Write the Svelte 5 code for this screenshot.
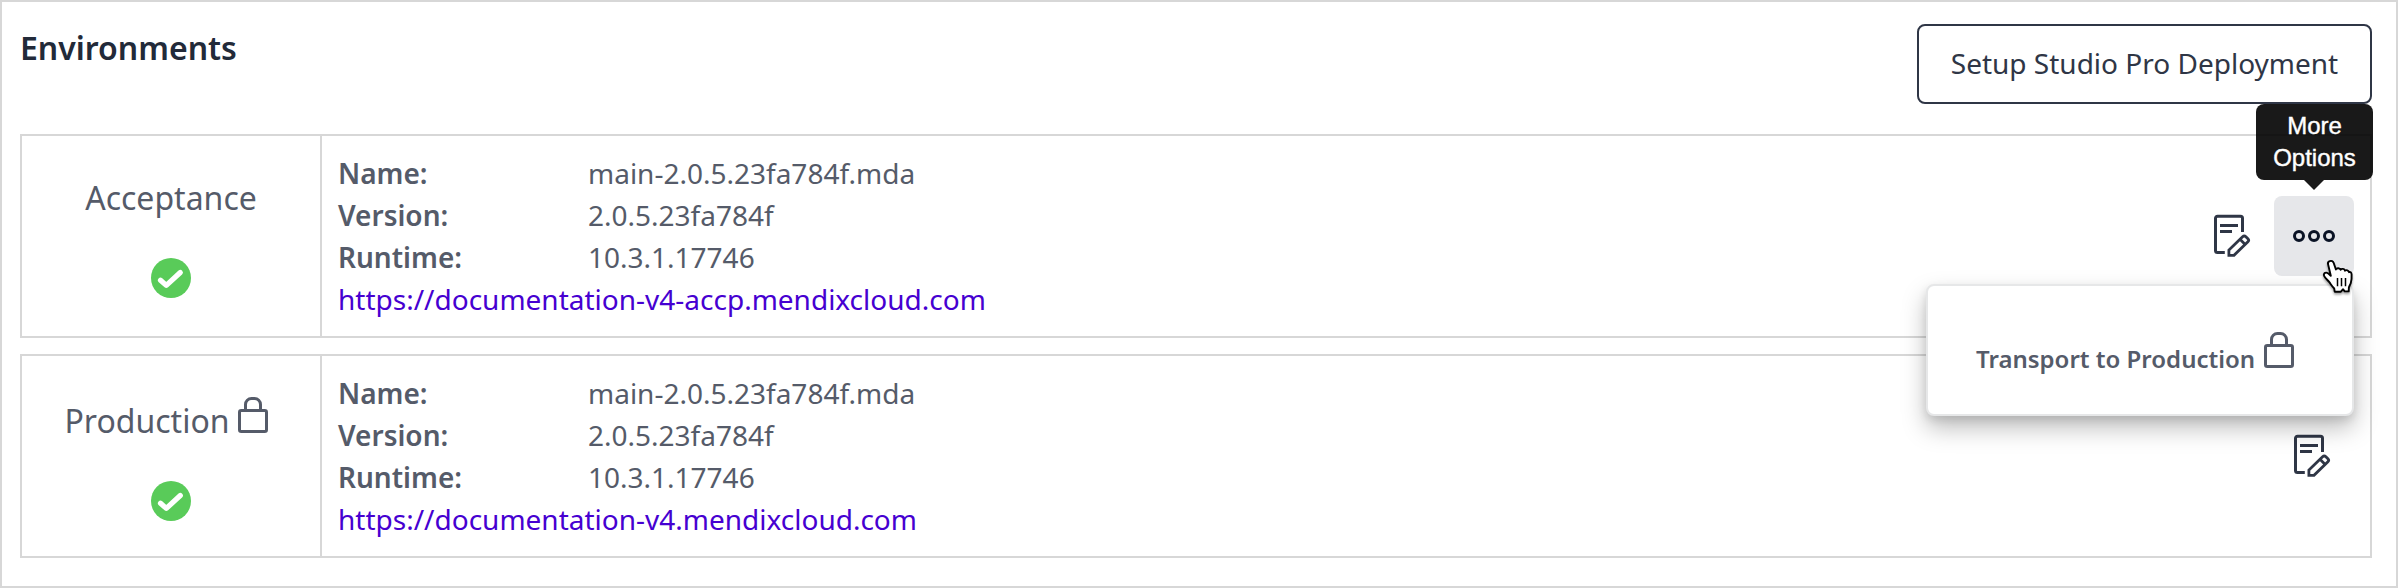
<script>
  const environments = [
    {
      name: 'Acceptance',
      locked: false,
      menuOpen: true,
      url: 'https://documentation-v4-accp.mendixcloud.com'
    },
    {
      name: 'Production',
      locked: true,
      menuOpen: false,
      url: 'https://documentation-v4.mendixcloud.com'
    }
  ];
  const details = [
    ['Name:', 'main-2.0.5.23fa784f.mda'],
    ['Version:', '2.0.5.23fa784f'],
    ['Runtime:', '10.3.1.17746']
  ];
</script>

{#snippet lock()}
  <svg class="lock" width="30" height="36" viewBox="0 0 30 36" fill="none" stroke="currentColor" stroke-width="3" aria-hidden="true">
    <rect x="1.5" y="13.5" width="27" height="21" rx="1.8" />
    <path d="M7.5 13V7.5a6 6 0 0 1 6-6h3a6 6 0 0 1 6 6V13" />
  </svg>
{/snippet}

{#snippet editIcon()}
  <svg width="38" height="44" viewBox="0 0 38 44" fill="none" stroke="currentColor" stroke-width="3" aria-hidden="true">
    <path d="M10.8 38.500H3.500a2 2 0 0 1-2-2V4.300a2 2 0 0 1 2-2h23a2 2 0 0 1 2 2V18" />
    <path d="M6 11.500h18M6 17.500h12" />
    <path d="M14.900 41.300v-5.300L28.600 22.700a2.400 2.400 0 0 1 3.300 0l2 2a2.200 2.200 0 0 1 0 3.100L20 41.300zM26 25.300l5.200 5.200" stroke-width="2.800" />
  </svg>
{/snippet}

<main class="panel">
  <header>
    <h1>Environments</h1>
    <button class="setup">Setup Studio Pro Deployment</button>
  </header>

  <div class="list">
    {#each environments as env}
      <section class="environment">
        <div class="status" class:locked={env.locked}>
          <div class="title">
            <span>{env.name}</span>{#if env.locked}{@render lock()}{/if}
          </div>
          <svg class="check" width="40" height="40" viewBox="0 0 40 40" fill="none" aria-hidden="true">
            <circle cx="20" cy="20" r="20" fill="#59cb59" />
            <path d="M9.5 22.2l5.8 5.2L29.3 14.5" stroke="#fff" stroke-width="5.2" stroke-linecap="round" stroke-linejoin="round" />
          </svg>
        </div>

        <div class="details">
          <dl>
            {#each details as [label, value]}
              <dt>{label}</dt>
              <dd>{value}</dd>
            {/each}
          </dl>
          <a href={env.url}>{env.url}</a>
        </div>

        <div class="actions">
          <button class="edit" aria-label="Edit">{@render editIcon()}</button>
          {#if env.menuOpen}
            <div class="more-wrap">
              <button class="more" aria-label="More">
                <svg width="42" height="12" viewBox="0 0 42 12" fill="none" stroke="#0a1325" stroke-width="3" aria-hidden="true">
                  <circle cx="6" cy="6" r="4.5" />
                  <circle cx="21" cy="6" r="4.5" />
                  <circle cx="36" cy="6" r="4.5" />
                </svg>
              </button>
              <div class="tooltip">More<br />Options</div>
              <div class="menu"><span>Transport to Production</span>{@render lock()}</div>
              <svg class="pointer" width="34" height="36" viewBox="0 0 34 36" aria-hidden="true">
                <path d="M8.700 2.200c1.700-.8 3.400 0 4 1.800l2.200 6.500c.7-1.900 4.100-1.700 4.700.3.900-1.500 4-1.100 4.400.9 1.200-1.200 3.600-.4 4.100 1.500 1-.7 2.400.2 2.500 2.200.2 3.200-.1 6-.8 8.500-.5 1.800-1.600 3-1.900 4.500l-.2 4h-4l-1.600-2.200-2.200 2.500h-6.200l-.5-3.200c-2-1.900-3.500-4.500-5.100-6.600-1.500-2-3.600-3.300-4.900-5.800-1-1.800.3-3.600 2.100-3.500 1.700.1 3 1.600 4.500 3.200L7.100 5.400c-.5-1.400.3-2.700 1.600-3.200z" fill="#fff" stroke="#000" stroke-width="1.900" stroke-linejoin="round" />
                <path d="M16.500 19v8.300M20.500 19v8.300M24.500 19v8.300" fill="none" stroke="#000" stroke-width="1.500" />
              </svg>
            </div>
          {/if}
        </div>
      </section>
    {/each}
  </div>
</main>

<style>
  :global(body) {
    margin: 0;
    background: #fff;
  }

  .panel {
    box-sizing: border-box;
    width: 100vw;
    height: 588px;
    border: 2px solid #d7d7d7;
    padding: 22px 24px 28px 18px;
    font-family: 'Noto Sans', sans-serif;
    font-size: 28px;
    line-height: 42px;
    color: #555b69;
  }

  button {
    font: inherit;
    padding: 0;
    border: 0;
    background: none;
    color: #2f3646;
  }

  header {
    display: flex;
    justify-content: space-between;
    align-items: flex-start;
    height: 110px;
  }

  h1 {
    margin: 0;
    font-size: 32px;
    line-height: 48px;
    font-weight: 600;
    color: #222a39;
  }

  .setup {
    box-sizing: border-box;
    width: 455px;
    height: 80px;
    padding-bottom: 2px;
    border: 2px solid #2f3646;
    border-radius: 8px;
    white-space: nowrap;
  }

  .list {
    display: flex;
    flex-direction: column;
    gap: 16px;
  }

  .environment {
    box-sizing: border-box;
    display: flex;
    height: 204px;
    border: 2px solid #d7d7d7;
  }

  .status {
    box-sizing: border-box;
    width: 300px;
    padding-top: 38px;
    border-right: 2px solid #d7d7d7;
    display: flex;
    flex-direction: column;
    align-items: center;
    gap: 36px;
  }

  .title {
    display: flex;
    align-items: flex-start;
    gap: 8px;
    height: 48px;
    font-size: 32px;
    line-height: 48px;
  }

  .locked .title {
    height: 51px;
    padding-right: 10px;
  }

  .locked .title span {
    padding-top: 3px;
  }

  .locked .lock {
    margin-top: 3px;
  }

  .check {
    flex: none;
  }

  .details {
    flex: 1;
    padding: 16px 0 0 16px;
  }

  dl {
    display: grid;
    grid-template-columns: 250px 1fr;
    margin: 0;
  }

  dt {
    font-weight: 600;
  }

  dd {
    margin: 0;
  }

  a {
    color: #4600d1;
    text-decoration: none;
  }

  .actions {
    display: flex;
    align-items: center;
    gap: 22px;
    padding-right: 16px;
  }

  .edit {
    display: flex;
    width: 38px;
    height: 44px;
  }

  .environment:last-child .actions {
    padding-right: 38px;
  }

  .more-wrap {
    position: relative;
    width: 80px;
    height: 80px;
  }

  .more {
    display: grid;
    place-items: center;
    width: 80px;
    height: 80px;
    border-radius: 8px;
    background: #e6e7ea;
  }

  .tooltip {
    position: absolute;
    z-index: 2;
    left: -18px;
    bottom: 96px;
    box-sizing: border-box;
    width: 117px;
    height: 76px;
    padding-top: 6px;
    border-radius: 8px;
    background: rgba(0, 0, 0, 0.9);
    color: #fff;
    font-family: 'Liberation Sans', sans-serif;
    font-size: 24px;
    line-height: 32px;
    text-align: center;
    -webkit-text-stroke: 0.4px #fff;
  }

  .tooltip::after {
    content: '';
    position: absolute;
    top: 76px;
    left: 48px;
    border: 10px solid transparent;
    border-top-color: rgba(0, 0, 0, 0.9);
    border-bottom: 0;
  }

  .menu {
    position: absolute;
    z-index: 2;
    top: 88px;
    right: 0;
    box-sizing: border-box;
    width: 428px;
    height: 132px;
    display: flex;
    align-items: flex-start;
    gap: 9px;
    padding: 46px 0 0 48px;
    border: 2px solid #e6e7e8;
    border-radius: 8px;
    background: #fff;
    box-shadow: 0 12px 24px rgba(0, 0, 0, 0.26), 0 4px 8px rgba(0, 0, 0, 0.1);
    font-size: 24px;
    line-height: 36px;
    font-weight: 600;
    white-space: nowrap;
  }

  .menu span {
    padding-top: 9px;
  }

  .pointer {
    position: absolute;
    z-index: 3;
    left: 47px;
    top: 63px;
    filter: drop-shadow(0 2px 1px rgba(0, 0, 0, 0.35));
  }
</style>
